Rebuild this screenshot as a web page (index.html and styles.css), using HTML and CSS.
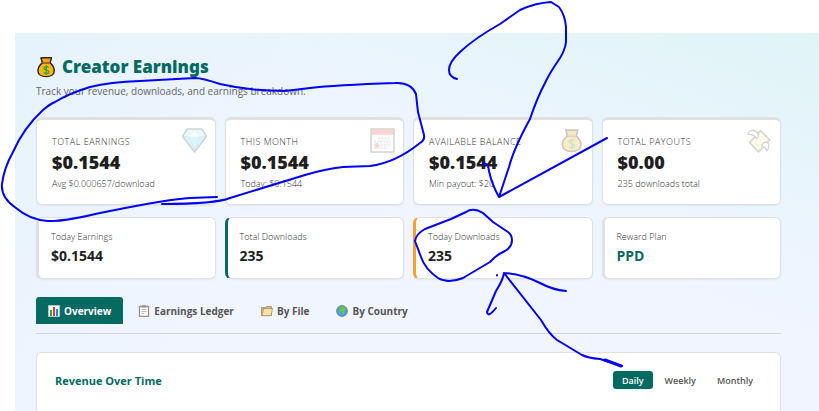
FILE: index.html
```html
<!DOCTYPE html>
<html lang="en">
<head>
    <meta charset="UTF-8">
    <meta name="viewport" content="width=device-width, initial-scale=1.0">
    <title>Creator Earnings</title>
    <link rel="stylesheet" href="styles.css">
</head>
<body>
    <svg class="symbols" aria-hidden="true">
        <symbol id="bag" viewBox="0 0 20 24">
            <path d="M4.500 2h11.500l-1.500 5.500h-8.500z" fill="#f5a60b" stroke="#2b2430" stroke-width="1.600" stroke-linejoin="round"/>
            <path d="M6 7.500h8.500c3 2.500 4.500 5 4.500 8.500 0 4-3.500 6.500-8.800 6.500S1.200 20 1.200 16c0-3.500 1.800-6 4.800-8.500z" fill="#fdb614" stroke="#2b2430" stroke-width="1.600"/>
            <path d="M6 7.200h8.500" stroke="#b5651d" stroke-width="1.500"/>
            <path d="M12.800 12.500c-1-1.500-5-1.500-5 .8 0 2.700 5.200 1.200 5.200 4 0 2.400-4.500 2.300-5.500.5M10.200 10v10.500" fill="none" stroke="#16a34a" stroke-width="1.300"/>
        </symbol>
    </svg>

    <main class="earnings">
        <header>
            <h1><svg class="title-icon"><use href="#bag"/></svg>Creator Earnings</h1>
            <p class="subtitle">Track your revenue, downloads, and earnings breakdown.</p>
        </header>

        <section class="cards">
            <div class="card">
                <svg class="card-icon" viewBox="0 0 24 24">
                    <path d="M5 1h14l4.500 7L12 23 .5 8z" fill="#6fdcf7"/>
                    <path d="M5 1h14l4.500 7H.5z" fill="#a5e7fa"/>
                    <path d="M12 3l5 5.500H7z" fill="#fff"/>
                    <path d="M1 8.500h6L12 22l5-13.500h6" fill="none" stroke="#54c5e8"/>
                    <path d="M5 1h14l4.500 7L12 23 .5 8z" fill="none" stroke="#555" stroke-width="1.500" stroke-linejoin="round"/>
                </svg>
                <h2>Total Earnings</h2>
                <strong>$0.1544</strong>
                <small>Avg $0.000657/download</small>
            </div>
            <div class="card">
                <svg class="card-icon" viewBox="0 0 24 24">
                    <path d="M1 1h22v22H1z" fill="#f6f6f6"/>
                    <path d="M1.500 1.500h21v5h-21z" fill="#f2584a"/>
                    <path d="M8 10h12M4 13h16M4 16h16M4 19h12" stroke="#aaa" stroke-width="1.800" stroke-dasharray="1.800 1.200"/>
                    <path d="M4 17h5M6.500 14.500v5" stroke="#f2584a" stroke-width="2"/>
                    <path d="M1 1h22v22H1z" fill="none" stroke="#555" stroke-width="1.500"/>
                </svg>
                <h2>This Month</h2>
                <strong>$0.1544</strong>
                <small>Today: $0.1544</small>
            </div>
            <div class="card">
                <svg class="card-icon"><use href="#bag"/></svg>
                <h2>Available Balance</h2>
                <strong>$0.1544</strong>
                <small>Min payout: $20</small>
            </div>
            <div class="card">
                <svg class="card-icon" viewBox="0 0 24 24">
                    <path d="M13 2.500l9 9L11 23 2.500 14z" fill="#dfe36a" stroke="#555" stroke-width="1.400" stroke-linejoin="round"/>
                    <path d="M13.500 6l5 5-8 9-5-6z" fill="none" stroke="#fff" stroke-width="1.300"/>
                    <path d="M14.500 10.500c-2-2-6 1.500-4 3.500s6-1 4-3.500z" fill="none" stroke="#fff" stroke-width="1.500"/>
                    <path d="M9 10C8 7 5 6 1 6c0-3 4-5 7-3 2 1 3 3 3 5zM16 14c3-1 5 0 5 3 0 2-1 4-2 5-1-3-2-4-5-5z" fill="#fff" stroke="#555" stroke-width="1.200"/>
                </svg>
                <h2>Total Payouts</h2>
                <strong>$0.00</strong>
                <small>235 downloads total</small>
            </div>
        </section>

        <section class="cards">
            <div class="stat"><h3>Today Earnings</h3><b>$0.1544</b></div>
            <div class="stat green"><h3>Total Downloads</h3><b>235</b></div>
            <div class="stat orange"><h3>Today Downloads</h3><b>235</b></div>
            <div class="stat plan"><h3>Reward Plan</h3><b>PPD</b></div>
        </section>

        <nav class="tabs">
            <button class="tab active" type="button">
                <svg viewBox="0 0 12 12"><path d="M.5.5h11v11H.5z" fill="#fff" stroke="#b8c4c8"/><path d="M2 5h2v6H2z" fill="#27a844"/><path d="M5 2h2v9H5z" fill="#e53935"/><path d="M8 4h2v7H8z" fill="#1e88e5"/></svg>Overview
            </button>
            <button class="tab" type="button">
                <svg viewBox="0 0 12 12"><path d="M1.500 1.500h9v10h-9z" fill="#fff" stroke="#9a8d82" stroke-width="1.300"/><path d="M4 .2h4v2.300H4z" fill="#8a949b"/><path d="M3.500 4.500h5M3.500 6.500h5M3.500 8.500h3" stroke="#aaa" stroke-width=".8"/></svg>Earnings Ledger
            </button>
            <button class="tab" type="button">
                <svg viewBox="0 0 12 12"><path d="M.5 10.500V2.500h4l1-1h5v9z" fill="#e3bd72" stroke="#8a7b62" stroke-width=".7"/><path d="M1 10.700L2.500 3.500h9l-1.300 7.200z" fill="#fbe0a6" stroke="#8a7b62" stroke-width=".6"/></svg>By File
            </button>
            <button class="tab" type="button">
                <svg viewBox="0 0 12 12"><circle cx="6" cy="6" r="5.400" fill="#4ba3e3" stroke="#4f7186" stroke-width=".8"/><path d="M4 2.500l3-1.500 2.500 1.500 1 2-2 1.500-.5 3-1.500 1-1-3-2-1z" fill="#68c44c"/><path d="M1 5l1.500 1.500.5 3z" fill="#68c44c"/></svg>By Country
            </button>
        </nav>

        <section class="panel">
            <h2>Revenue Over Time</h2>
            <div class="periods">
                <button class="period active" type="button">Daily</button>
                <button class="period" type="button">Weekly</button>
                <button class="period" type="button">Monthly</button>
            </div>
        </section>
    </main>

    <!-- pen marks over the page -->
    <svg class="marks" width="819" height="411" viewBox="0 0 819 411" aria-hidden="true">
        <path d="M217 197L190 198Q170 199 110 211C85 216 65 222 48 221Q30 220 16 208C7 202 1 194 2 184Q4 168 13 152C20 136 30 122 43 110Q50 104 55 102Q70 93 90 87Q110 82 140 81L195 78Q202 78 220 84Q250 91 285 91L310 88Q335 85 395 83Q411 82 416 94Q417 104 418 112L424 135Q425 140 420 143Q395 163 370 166L343 167Q325 169 305 175L230 198Q215 204 162 204"/>
        <path d="M457 79Q449 77 449 70Q449 62 460 52Q475 38 500 24L520 10Q535 3 551 2L559 7Q565 15 566 27V42Q565 50 560 58Q549 74 545 83Q537 98 530 119Q514 148 509 167L499 197L607 138M483 164Q488 162 489 171Q492 185 499 197"/>
        <path d="M451 219L466 212Q473 207 483 213L493 222L508 232Q512 235 512 240Q512 247 505 251Q496 255 490 262L463 278Q448 284 438 278Q425 269 421 257L415 241Q416 234 425 229Z"/>
        <path d="M504 273Q503 280 496 291L487 312Q488 318 496 308M504 273Q522 274 540 283Q553 290 566 291M504 273L541 320Q549 334 557 340L582 355Q588 358 600 359L622 366"/>
        <path d="M605 360L621 366" stroke-width="3"/>
        <path d="M497 275v.5"/>
    </svg>
</body>
</html>
```
FILE: styles.css
```css
* { box-sizing: border-box; }
body { font-family: 'Open Sans', 'Noto Sans', sans-serif; margin: 0; background: #fff; color: #1f1f1f; }
h1, h2, h3, p { margin: 0; font-weight: normal; }
button { font: inherit; border: none; background: none; cursor: pointer; }
.symbols { display: none; }

.earnings { margin: 33px 0 0 15px; padding: 21px 38px 0 21px; min-height: 378px; background: linear-gradient(125deg, rgba(230,243,252,1) 0%, rgba(240,245,255,0) 35%), linear-gradient(200deg, #e0f4f8 0%, #f0f5ff 45%); }
h1 { display: flex; align-items: center; gap: 6px; font-family: 'Noto Sans', sans-serif; font-size: 17px; line-height: 26px; font-weight: 900; color: #046a62; }
.title-icon { width: 20px; height: 22px; }
.subtitle { margin: 3px 0 18px; font-size: 10px; line-height: 16px; font-weight: 400; color: #666; }

.cards { display: grid; grid-template-columns: repeat(4, 1fr); gap: 9px; margin-bottom: 12px; }
.card { position: relative; padding: 15px; border: 1px solid #e0e0e0; border-top-width: 3px; border-radius: 6px; background: #fff; box-shadow: 0 1px 2px rgba(0,0,0,0.06); }
.card-icon { position: absolute; top: 8px; right: 8px; width: 25px; height: 25px; opacity: 0.25; }
.card h2 { font-size: 9px; line-height: 13px; font-weight: 300; text-transform: uppercase; letter-spacing: 0.5px; color: #333; }
.card strong { display: block; font-family: 'Noto Sans', sans-serif; font-size: 18px; line-height: 29px; font-weight: 900; }
.card small { display: block; font-size: 9px; line-height: 14px; font-weight: 300; color: #333; margin-bottom: -2px; }

.stat { padding: 12px; border: 1px solid #e0e0e0; border-left-width: 3px; border-radius: 6px; background: #fff; box-shadow: 0 1px 2px rgba(0,0,0,0.06); }
.stat h3 { font-size: 9px; line-height: 13px; font-weight: 300; color: #333; }
.stat b { display: block; margin-top: 2px; font-size: 14px; line-height: 21px; }
.green { border-left-color: #046a62; }
.orange { border-left-color: #f5a030; }
.plan b { color: #046a62; }

.tabs { display: flex; gap: 3px; margin-top: 18px; padding-bottom: 9px; border-bottom: 1px solid #d0d5dd; }
.tab { display: flex; align-items: center; gap: 4px; padding: 0 12px; height: 27px; font-size: 10px; font-weight: 700; color: #555; border-radius: 3px 3px 0 0; }
.tab svg { width: 12px; height: 12px; }
.tab.active { background: #046a62; color: #fff; }

.panel { display: flex; justify-content: space-between; align-items: flex-start; margin-top: 18px; padding: 18px; min-height: 59px; border: 1px solid #e0e0e0; border-bottom: none; border-radius: 6px 6px 0 0; background: #fff; }
.panel h2 { font-size: 11px; line-height: 20px; font-weight: 700; color: #046a62; }
.periods { display: flex; gap: 3px; }
.period { padding: 0 9px; height: 18px; font-size: 9px; font-weight: 600; color: #555; border-radius: 3px; }
.period.active { background: #046a62; color: #fff; }

.marks { position: absolute; top: 0; left: 0; fill: none; stroke: #0000ff; stroke-width: 2; stroke-linecap: round; stroke-linejoin: round; pointer-events: none; }
```
